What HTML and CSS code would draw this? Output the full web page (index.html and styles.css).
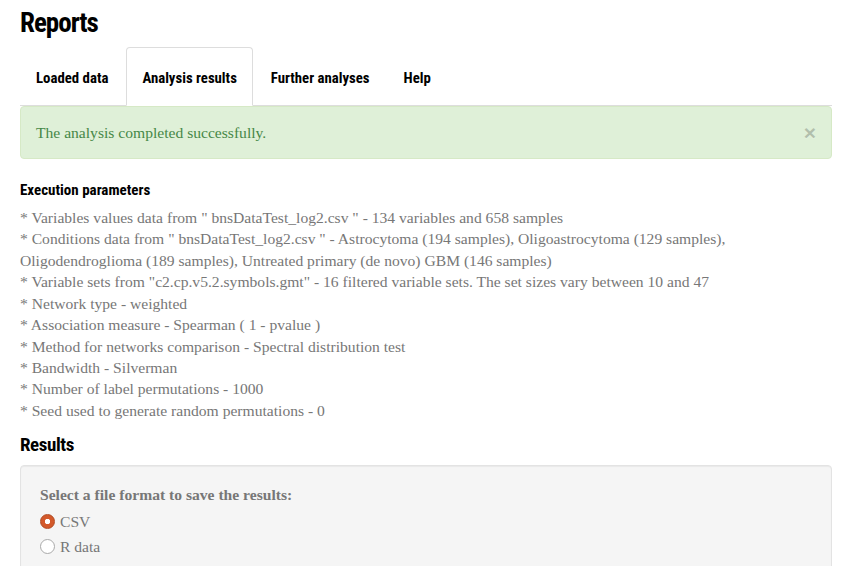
FILE: index.html
```html
<!DOCTYPE html>
<html lang="en">
<head>
<meta charset="utf-8">
<title>Reports</title>
<link rel="stylesheet" href="styles.css">
</head>
<body>
<div class="page">
  <h1 class="title">Reports</h1>
  <ul class="tabs">
    <li class="tab"><a class="tab-link">Loaded data</a></li>
    <li class="tab active"><a class="tab-link">Analysis results</a></li>
    <li class="tab"><a class="tab-link">Further analyses</a></li>
    <li class="tab"><a class="tab-link">Help</a></li>
  </ul>
  <div class="alert">
    <span class="alert-text">The analysis completed successfully.</span>
    <span class="close">&times;</span>
  </div>
  <h5 class="subhead">Execution parameters</h5>
  <div class="params">
    <div>* Variables values data from " bnsDataTest_log2.csv " - 134 variables and 658 samples</div>
    <div>* Conditions data from " bnsDataTest_log2.csv " - Astrocytoma (194 samples), Oligoastrocytoma (129 samples), Oligodendroglioma (189 samples), Untreated primary (de novo) GBM (146 samples)</div>
    <div>* Variable sets from "c2.cp.v5.2.symbols.gmt" - 16 filtered variable sets. The set sizes vary between 10 and 47</div>
    <div>* Network type - weighted</div>
    <div>* Association measure - Spearman ( 1 - pvalue )</div>
    <div>* Method for networks comparison - Spectral distribution test</div>
    <div>* Bandwidth - Silverman</div>
    <div>* Number of label permutations - 1000</div>
    <div>* Seed used to generate random permutations - 0</div>
  </div>
  <h4 class="section">Results</h4>
  <div class="well">
    <div class="well-label">Select a file format to save the results:</div>
    <label class="radio"><span class="radio-dot checked"></span>CSV</label>
    <label class="radio"><span class="radio-dot"></span>R data</label>
  </div>
</div>
</body>
</html>
```
FILE: styles.css
```css
html, body {
  margin: 0;
  padding: 0;
  background: #fff;
}
body {
  font-family: "Liberation Serif", "Times New Roman", serif;
  font-size: 15.6px;
  line-height: 21.43px;
  color: #777;
}
.page {
  padding: 0 29px 0 20px;
}
.title, .tab-link, .subhead, .section {
  font-family: "Roboto Condensed", "Noto Sans", sans-serif;
  font-stretch: condensed;
  font-weight: bold;
  color: #000;
}
.title {
  margin: 7px 0 7px;
  font-size: 27px;
  letter-spacing: -1px;
  line-height: 33px;
}
.tabs {
  list-style: none;
  margin: 0;
  padding: 0;
  display: flex;
  border-bottom: 1px solid #ddd;
}
.tab {
  margin: 0 2px -1px 0;
}
.tab-link {
  display: block;
  padding: 19px 15px 16px;
  font-size: 14.8px;
  line-height: 22px;
  border: 1px solid transparent;
  border-radius: 4px 4px 0 0;
}
.tab.active .tab-link {
  background: #fff;
  border-color: #ddd;
  border-bottom-color: transparent;
}
.alert {
  display: flex;
  justify-content: space-between;
  align-items: center;
  padding: 15px;
  margin-bottom: 23px;
  background: #dff0d8;
  border: 1px solid #d6e9c6;
  border-radius: 4px;
  color: #468847;
}
.close {
  font-family: "Liberation Sans", Arial, sans-serif;
  font-size: 21px;
  font-weight: bold;
  line-height: 1;
  color: #000;
  opacity: 0.2;
  text-shadow: 0 1px 0 #fff;
}
.subhead {
  margin: 0 0 8px;
  font-size: 15px;
  line-height: 16.5px;
}
.section {
  margin: 13px 0 10px;
  font-size: 19px;
  letter-spacing: -0.4px;
  line-height: 21px;
}
.well {
  padding: 18px 19px 19px;
  background: #f5f5f5;
  border: 1px solid #e3e3e3;
  border-radius: 4px;
  box-shadow: inset 0 1px 1px rgba(0, 0, 0, 0.05);
  min-height: 120px;
}
.well-label {
  font-weight: bold;
  margin-bottom: 5px;
}
.radio {
  display: flex;
  align-items: center;
  margin-bottom: 4px;
}
.radio-dot {
  box-sizing: border-box;
  width: 15px;
  height: 15px;
  border-radius: 50%;
  border: 1px solid #a9a9a9;
  background: #fff;
  margin-right: 5px;
  flex: none;
}
.radio-dot.checked {
  border-color: #b04a22;
  background: radial-gradient(circle, #fff 0 2.4px, #d3592b 3px);
}
```
